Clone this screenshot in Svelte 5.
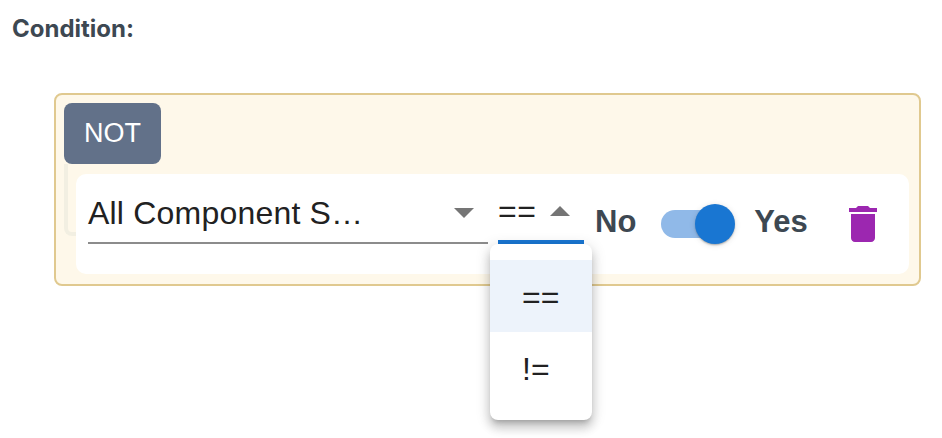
<script lang="ts">
  let negated = $state(true);
  const operators = ["==", "!="];
  let operator = $state("==");
</script>

<div class="page">
  <div class="title">Condition:</div>

  <div class="group">
    <button class="not-btn" onclick={() => (negated = !negated)}>NOT</button>
    <div class="connector"></div>

    <div class="rule">
      <div class="field">
        <span class="field-text">All Component S…</span>
        <svg class="arrow" viewBox="0 0 20 10"><path d="M0 0h20L10 10z" /></svg>
      </div>

      <div class="op">
        <span class="op-text">{operator}</span>
        <svg class="arrow up" viewBox="0 0 20 10"><path d="M0 10h20L10 0z" /></svg>
        <ul class="menu">
          {#each operators as o}
            <li class:active={o === operator}>{o}</li>
          {/each}
        </ul>
      </div>

      <span class="word no">No</span>
      <div class="toggle">
        <div class="track"></div>
        <div class="thumb"></div>
      </div>
      <span class="word yes">Yes</span>

      <svg class="trash" viewBox="0 0 24 24">
        <path d="M6 19c0 1.1.9 2 2 2h8c1.1 0 2-.9 2-2V7H6v12zM19 4h-3.5l-1-1h-5l-1 1H5v2h14V4z" />
      </svg>
    </div>
  </div>
</div>

<style>
  :global(body) {
    margin: 0;
    background: #fff;
  }

  .page {
    width: 942px;
    height: 438px;
    overflow: hidden;
    box-sizing: border-box;
    padding: 15px 21px 0 12px;
    font-family: "Liberation Sans", Arial, sans-serif;
  }

  .title {
    font-family: Inter, sans-serif;
    font-weight: 700;
    font-size: 24px;
    line-height: 28px;
    color: #3d4852;
  }

  .group {
    position: relative;
    margin: 50px 0 0 42px;
    height: 193px;
    box-sizing: border-box;
    padding: 8px;
    background: #fef8ea;
    border: 2px solid #e0c98f;
    border-radius: 8px;
  }

  .not-btn {
    display: block;
    width: 97px;
    height: 61px;
    padding: 0;
    border: 0;
    border-radius: 8px;
    background: #627189;
    color: #fff;
    font-family: inherit;
    font-size: 27px;
  }

  .connector {
    position: absolute;
    left: 8px;
    top: 69px;
    width: 14px;
    height: 72px;
    box-sizing: border-box;
    border-left: 4px solid #f2efe2;
    border-bottom: 4px solid #f2efe2;
    border-bottom-left-radius: 8px;
  }

  .rule {
    position: relative;
    display: flex;
    align-items: flex-start;
    height: 100px;
    box-sizing: border-box;
    margin: 10px 2px 0 12px;
    padding: 16px 0 0 12px;
    background: #fff;
    border-radius: 10px;
  }

  .field {
    display: flex;
    align-items: center;
    justify-content: space-between;
    width: 400px;
    height: 54px;
    box-sizing: border-box;
    padding: 2px 14px 8px 0;
    border-bottom: 2px solid #8c8c8c;
  }

  .field-text {
    font-size: 32px;
    letter-spacing: 0.2px;
    line-height: 48px;
    color: #212121;
  }

  .arrow {
    width: 20px;
    height: 10px;
    fill: #757575;
  }

  .op {
    position: relative;
    display: flex;
    align-items: center;
    justify-content: space-between;
    width: 86px;
    height: 54px;
    box-sizing: border-box;
    margin-left: 10px;
    padding: 0 14px 8px 0;
    border-bottom: 4px solid #1976d2;
  }

  .op-text {
    font-size: 32px;
    letter-spacing: 0.5px;
    line-height: 42px;
    color: #212121;
  }

  .menu {
    position: absolute;
    left: -8px;
    top: 54px;
    width: 102px;
    height: 176px;
    box-sizing: border-box;
    margin: 0;
    padding: 16px 0;
    list-style: none;
    background: #fff;
    border-radius: 8px;
    box-shadow: 0 5px 5px -3px rgba(0, 0, 0, 0.2), 0 8px 10px 1px rgba(0, 0, 0, 0.14), 0 3px 14px 2px rgba(0, 0, 0, 0.12);
  }

  .menu li {
    height: 72px;
    box-sizing: border-box;
    padding-left: 32px;
    font-size: 32px;
    line-height: 74px;
    color: #212121;
  }

  .menu li.active {
    background: #edf3fb;
  }

  .word {
    font-size: 31px;
    font-weight: 700;
    line-height: 64px;
    color: #3d4852;
  }

  .no {
    margin-left: 11px;
  }

  .toggle {
    position: relative;
    width: 74px;
    height: 40px;
    margin: 14px 0 0 25px;
  }

  .track {
    position: absolute;
    left: 0;
    top: 6px;
    width: 68px;
    height: 28px;
    border-radius: 14px;
    background: #90b9e8;
  }

  .thumb {
    position: absolute;
    right: 0;
    top: 0;
    width: 40px;
    height: 40px;
    border-radius: 50%;
    background: #1976d2;
    box-shadow: 0 2px 2px -1px rgba(0, 0, 0, 0.2), 0 1px 2px 0 rgba(0, 0, 0, 0.14), 0 1px 6px 0 rgba(0, 0, 0, 0.12);
  }

  .yes {
    margin-left: 19px;
  }

  .trash {
    width: 48px;
    height: 48px;
    margin: 10px 0 0 31px;
    fill: #9c27b0;
  }
</style>
